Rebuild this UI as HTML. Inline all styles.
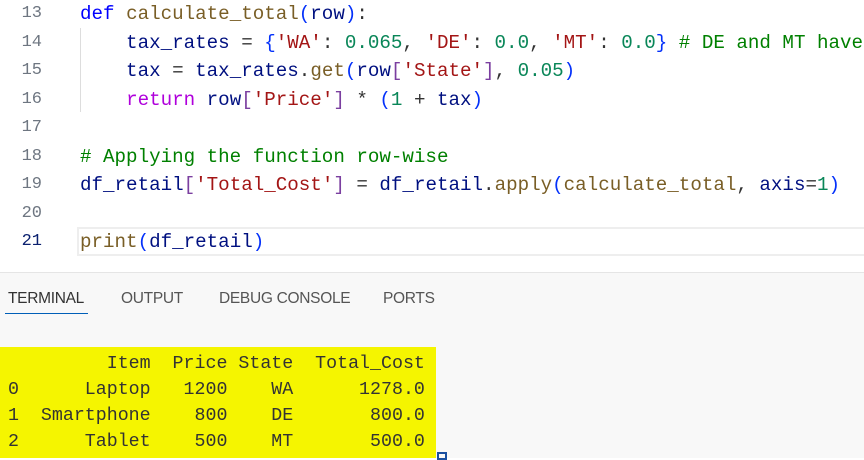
<!DOCTYPE html>
<html><head><meta charset="utf-8"><style>
*{margin:0;padding:0;box-sizing:border-box}
body{width:864px;height:458px;overflow:hidden;background:#fff;position:relative;font-family:"Liberation Mono",monospace}
.ln{position:absolute;left:0;width:42px;text-align:right;color:#6e7681;font-size:17px;line-height:28.5px}
.code{position:absolute;left:80px;top:0px;width:784px;overflow:hidden;font-size:19.2px;line-height:28.5px;white-space:pre;color:#001080}
.k{color:#0000ff}.f{color:#795e26}.s{color:#a31515}.n{color:#098658}.c{color:#008000}.r{color:#af00db}.b{color:#0431fa}.p{color:#7b3fa0}.o{color:#333}
.hl{position:absolute;left:77px;width:787px;top:227px;height:29px;border:2px solid #eee;border-right:none}
.guide{position:absolute;left:80px;top:28px;width:1px;height:84px;background:#ddd}
.panel{position:absolute;left:0;top:272px;width:864px;height:186px;background:#f8f8f8;border-top:1px solid #e5e5e5}
.tab{position:absolute;top:290px;font-family:"Liberation Sans",sans-serif;font-size:15.5px;color:#555;letter-spacing:-0.3px}
.ul{position:absolute;left:5px;top:313px;width:83px;height:1px;background:#005fb8}
.term{position:absolute;left:0;top:347px;width:436px;height:111px;background:#f5f500}
.tt{position:absolute;left:8px;top:351px;font-size:18.3px;line-height:26px;white-space:pre;color:#333}
.cur{position:absolute;left:437px;top:452px;width:10px;height:8px;border:2px solid #1a4fa0}
</style></head><body>
<div class="hl"></div>
<div class="guide"></div>
<div class="ln" style="top:0px">13<br>14<br>15<br>16<br>17<br>18<br>19<br>20<br><span style="color:#0b216f">21</span></div>
<div class="code"><span class="k">def</span> <span class="f">calculate_total</span><span class="b">(</span>row<span class="b">)</span><span class="o">:</span>
    tax_rates <span class="o">=</span> <span class="b">{</span><span class="s">'WA'</span><span class="o">:</span> <span class="n">0.065</span><span class="o">,</span> <span class="s">'DE'</span><span class="o">:</span> <span class="n">0.0</span><span class="o">,</span> <span class="s">'MT'</span><span class="o">:</span> <span class="n">0.0</span><span class="b">}</span> <span class="c"># DE and MT have</span>
    tax <span class="o">=</span> tax_rates<span class="o">.</span><span class="f">get</span><span class="b">(</span>row<span class="p">[</span><span class="s">'State'</span><span class="p">]</span><span class="o">,</span> <span class="n">0.05</span><span class="b">)</span>
    <span class="r">return</span> row<span class="p">[</span><span class="s">'Price'</span><span class="p">]</span> <span class="o">*</span> <span class="b">(</span><span class="n">1</span> <span class="o">+</span> tax<span class="b">)</span>

<span class="c"># Applying the function row-wise</span>
df_retail<span class="p">[</span><span class="s">'Total_Cost'</span><span class="p">]</span> <span class="o">=</span> df_retail<span class="o">.</span><span class="f">apply</span><span class="b">(</span><span class="f">calculate_total</span><span class="o">,</span> axis<span class="o">=</span><span class="n">1</span><span class="b">)</span>

<span class="f">print</span><span class="b">(</span>df_retail<span class="b">)</span></div>
<div class="panel"></div>
<div class="tab" style="left:8px;color:#333">TERMINAL</div>
<div class="tab" style="left:121px">OUTPUT</div>
<div class="tab" style="left:219px">DEBUG CONSOLE</div>
<div class="tab" style="left:383px">PORTS</div>
<div class="ul"></div>
<div class="term"></div>
<div class="tt">         Item  Price State  Total_Cost
0      Laptop   1200    WA      1278.0
1  Smartphone    800    DE       800.0
2      Tablet    500    MT       500.0</div>
<div class="cur"></div>
</body></html>
